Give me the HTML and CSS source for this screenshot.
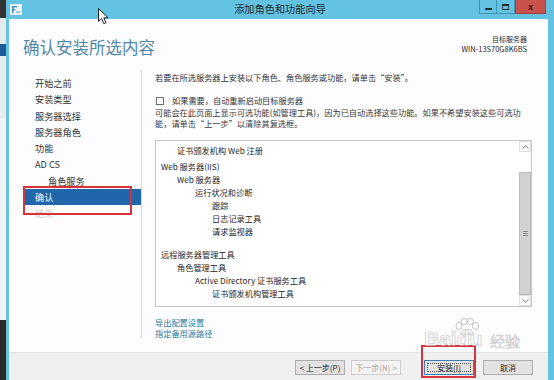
FILE: index.html
```html
<!DOCTYPE html>
<html lang="zh-CN">
<head>
<meta charset="utf-8">
<title>添加角色和功能向导</title>
<link rel="stylesheet" href="styles.css">
</head>
<body>
<div class="screen">
  <div class="desk"></div>
  <div class="window">
    <div class="titlebar">
      <div class="tb-left">
        <svg class="app-icon" width="12" height="11" viewBox="0 0 12 11">
          <rect x="0.5" y="0.5" width="11" height="10" fill="#f4f8fb" stroke="#dfe9ef"/>
          <rect x="2" y="2" width="1.6" height="7" fill="#3f8fc0"/>
          <rect x="2" y="2" width="5" height="1.4" fill="#3f8fc0"/>
          <rect x="2" y="5" width="3.5" height="1.3" fill="#3f8fc0"/>
          <rect x="6" y="7" width="4" height="2" fill="#9ec6dd"/>
        </svg>
      </div>
      <div class="tb-title">添加角色和功能向导</div>
      <div class="tb-right">
        <div class="wbtn wmin"><span class="ico-min"></span></div>
        <div class="wbtn wmax"><span class="ico-max"></span></div>
        <div class="wbtn wclose">x</div>
      </div>
    </div>
    <div class="frame">
      <div class="client">
        <header class="head">
          <h1>确认安装所选内容</h1>
          <div class="target">
            <div class="t-label">目标服务器</div>
            <div class="t-name">WIN-13S70G8K6BS</div>
          </div>
        </header>
        <div class="main">
          <nav class="nav">
            <ul>
              <li>开始之前</li>
              <li>安装类型</li>
              <li>服务器选择</li>
              <li>服务器角色</li>
              <li>功能</li>
              <li>AD CS</li>
              <li class="sub">角色服务</li>
              <li class="active">确认</li>
              <li class="off">结果</li>
            </ul>
            <div class="mark"></div>
          </nav>
          <section class="content">
            <p class="intro">若要在所选服务器上安装以下角色、角色服务或功能，请单击“安装”。</p>
            <div class="check-row"><span class="box"></span><span>如果需要，自动重新启动目标服务器</span></div>
            <p class="note"><span class="ln">可能会在此页面上显示可选功能(如管理工具)，因为已自动选择这些功能。如果不希望安装这些可选功</span><span class="ln">能，请单击“上一步”以清除其复选框。</span></p>
            <div class="listbox">
              <div class="items">
                <div class="group">
                  <div class="l1">证书颁发机构 Web 注册</div>
                </div>
                <div class="group g2">
                  <div class="l0">Web 服务器(IIS)</div>
                  <div class="l1">Web 服务器</div>
                  <div class="l2">运行状况和诊断</div>
                  <div class="l3">跟踪</div>
                  <div class="l3">日志记录工具</div>
                  <div class="l3">请求监视器</div>
                </div>
                <div class="group g3">
                  <div class="l0">远程服务器管理工具</div>
                  <div class="l1">角色管理工具</div>
                  <div class="l2">Active Directory 证书服务工具</div>
                  <div class="l3">证书颁发机构管理工具</div>
                </div>
              </div>
              <div class="sb">
                <div class="sb-btn"><svg width="7" height="4" viewBox="0 0 7 4"><polyline points="0.5,3.5 3.5,0.8 6.5,3.5" fill="none" stroke="#7a7a7a" stroke-width="1"/></svg></div>
                <div class="sb-track"><div class="thumb"><span class="grip"></span></div></div>
                <div class="sb-btn"><svg width="7" height="4" viewBox="0 0 7 4"><polyline points="0.5,0.5 3.5,3.2 6.5,0.5" fill="none" stroke="#7a7a7a" stroke-width="1"/></svg></div>
              </div>
            </div>
            <div class="links">
              <div>导出配置设置</div>
              <div>指定备用源路径</div>
            </div>
          </section>
        </div>
        <footer class="foot">
          <div class="btn">&lt; 上一步(P)</div>
          <div class="btn disabled next">下一步(N) &gt;</div>
          <div class="btn focus install">安装(I)</div>
          <div class="btn cancel">取消</div>
          <div class="mark2"></div>
        </footer>
      </div>
    </div>
  </div>
  <svg class="cursor" width="11" height="17" viewBox="0 0 11 17">
    <path d="M0.5 0.5 L0.5 13.5 L3.6 10.6 L5.8 15.6 L8 14.7 L5.8 9.8 L10 9.8 Z" fill="#fff" stroke="#222" stroke-width="1" stroke-linejoin="round"/>
  </svg>
  <div class="wm">
    <svg class="paw" width="26" height="18" viewBox="0 0 26 18">
      <g fill="rgba(255,255,255,0.55)" stroke="rgba(130,130,130,0.45)" stroke-width="1">
        <ellipse cx="5" cy="8" rx="3" ry="3.6"/>
        <ellipse cx="10" cy="3.6" rx="3" ry="3.2"/>
        <ellipse cx="16.5" cy="3.6" rx="3" ry="3.2"/>
        <ellipse cx="21.5" cy="8" rx="3" ry="3.6"/>
        <path d="M7 16 C8 10 18 10 19.5 16 Z"/>
      </g>
    </svg>
    <span class="wm-en">Baidu</span><span class="wm-cn">经验</span>
  </div>
</div>
</body>
</html>
```
FILE: styles.css
```css
* { box-sizing: border-box; margin: 0; padding: 0; }
html, body { width: 554px; height: 380px; overflow: hidden; }
body {
  background: #2b2b2b;
  font-family: "Noto Sans CJK SC", "Noto Sans", sans-serif;
  color: #2d2d2d;
}
.screen { position: relative; display: flex; width: 554px; height: 380px; }
.desk {
  width: 6px; flex: none;
  background: linear-gradient(to bottom,
    #333 0 18px, #e4eaee 18px 44px, #1d5c96 44px 56px,
    #e6ecef 56px 118px, #f2f4f5 118px 320px, #2a2a2a 320px);
}
.window { flex: 1; display: flex; flex-direction: column; min-width: 0; }

/* title bar */
.titlebar {
  height: 19px; flex: none; background: #64c2e2;
  display: grid; grid-template-columns: 1fr auto 1fr; align-items: start;
}
.tb-left { padding: 4px 0 0 4px; height: 19px; }
.app-icon { display: block; }
.tb-title { font-size: 10.2px; line-height: 18px; color: #1e2a30; }
.tb-right { display: flex; justify-content: flex-end; padding-right: 8px; }
.wbtn {
  height: 14px; display: flex; align-items: center; justify-content: center;
  border: 1px solid #3f93b6; border-top: 0;
}
.wmin { width: 17px; border-right: 0; }
.wmax { width: 19px; }
.wclose {
  width: 31px; background: #c8524c; border-color: #a8403b;
  color: #3a0e0e; font: bold 9px/12px "Liberation Sans", sans-serif;
}
.ico-min { width: 7px; height: 2px; background: #1f2b33; margin-top: 5px; }
.ico-max { width: 7px; height: 6px; border: 1px solid #1f2b33; border-top-width: 2px; }

/* window body */
.frame {
  flex: 1; display: flex; min-height: 0;
  border-left: 3px solid #64c2e2; border-right: 6px solid #64c2e2;
}
.client { flex: 1; display: flex; flex-direction: column; background: #fdfcfe; min-width: 0; }

.head {
  height: 51px; flex: none; display: flex; justify-content: space-between;
  align-items: flex-start; padding: 16px 21px 0 14px;
}
.head h1 { font-size: 16.5px; font-weight: 400; line-height: 22px; color: #5088a6; margin-top: 1px; }
.target { text-align: right; color: #2a2a2a; line-height: 9px; }
.t-label { font-size: 7px; }
.t-name { font-size: 7.5px; }

.main { flex: 1; display: flex; min-height: 0; }
.nav {
  width: 133px; flex: none; position: relative;
  border-right: 1px solid #dadada; margin-bottom: 14px;
}
.nav ul { list-style: none; padding: 5px 0 0 14px; }
.nav li {
  height: 16.25px; font-size: 9.2px; line-height: 16.25px;
  padding-left: 12px; color: #333;
}
.nav li.sub { padding-left: 25px; }
.nav li.active { background: #1f67aa; color: #fff; }
.nav li.off { color: #cfcfcf; }
.mark {
  position: absolute; left: 14px; top: 116px; width: 109px; height: 29px;
  border: 2px solid #d8323c;
}

.content {
  flex: 1; min-width: 0; padding: 2px 16px 0 13px;
  font-size: 8.2px; color: #333;
}
.intro { line-height: 10px; white-space: nowrap; }
.check-row { margin-top: 13px; height: 10px; display: flex; align-items: center; white-space: nowrap; }
.box { width: 8px; height: 8px; border: 1px solid #6b6b6b; background: #fff; margin: 1px 8px 0 1px; flex: none; }
.note { margin-top: 2px; line-height: 10.5px; color: #3a3a3a; }
.ln { display: block; white-space: nowrap; }

.listbox {
  margin-top: 12px; height: 167px; display: flex;
  border: 1px solid #c6c6c6; background: #fff;
}
.items { flex: 1; padding: 3px 0 0 5px; line-height: 13px; color: #262626; white-space: nowrap; }
.g2 { margin-top: 3px; }
.g3 { margin-top: 10px; }
.l1 { padding-left: 16px; }
.l2 { padding-left: 34px; }
.l3 { padding-left: 51px; }

.sb { width: 12px; flex: none; display: flex; flex-direction: column; background: #fff; }
.sb-btn {
  height: 11px; flex: none; display: flex; align-items: center; justify-content: center;
  border: 1px solid #e0e0e0; background: #fafafa;
}
.sb-btn svg { display: block; }
.sb-track { flex: 1; display: flex; flex-direction: column; padding-top: 20px; }
.thumb {
  flex: 1; background: #d2d2d2; border: 1px solid #b9b9b9;
  display: flex; align-items: center; justify-content: center;
}
.grip {
  width: 5px; height: 5px;
  background: repeating-linear-gradient(to bottom, #8a8a8a 0 1px, transparent 1px 2px);
}

.links { margin-top: 10px; line-height: 10.5px; color: #2b7ea4; }

/* footer */
.foot {
  height: 28px; flex: none; position: relative;
  background: #f0f0f0; border-top: 1px solid #e4e4e4;
  display: flex; justify-content: flex-end; align-items: flex-start;
  padding: 7px 15px 0 0;
}
.btn {
  width: 50px; height: 15px; border: 1px solid #adadad; background: #e2e2e2;
  font-size: 8px; line-height: 13px; text-align: center; color: #222; white-space: nowrap;
}
.next { margin-left: 6px; }
.install { margin-left: 23px; }
.cancel { margin-left: 9px; }
.btn.disabled { color: #a6a6a6; border-color: #cdcdcd; background: #f3f3f3; }
.btn.focus { border-color: #3f80b3; outline: 1px dotted #555; outline-offset: -4px; }
.mark2 {
  position: absolute; left: 412px; top: -8px; width: 55px; height: 33px;
  border: 2px solid #d7333d;
}

/* overlays */
.cursor { position: absolute; left: 98px; top: 8px; }
.wm {
  position: absolute; left: 424px; top: 318px; width: 110px; height: 34px;
}
.paw { position: absolute; left: 30px; top: 0; }
.wm-en {
  position: absolute; left: 0; top: 9px;
  font: bold 21px/24px "Liberation Sans", sans-serif;
  color: rgba(255,255,255,0.5);
  -webkit-text-stroke: 0.7px rgba(120,120,120,0.45);
}
.wm-cn {
  position: absolute; left: 66px; top: 14px;
  font: 15px/18px "Noto Sans CJK SC", sans-serif;
  color: rgba(255,255,255,0.5);
  -webkit-text-stroke: 0.6px rgba(120,120,120,0.45);
}
```
